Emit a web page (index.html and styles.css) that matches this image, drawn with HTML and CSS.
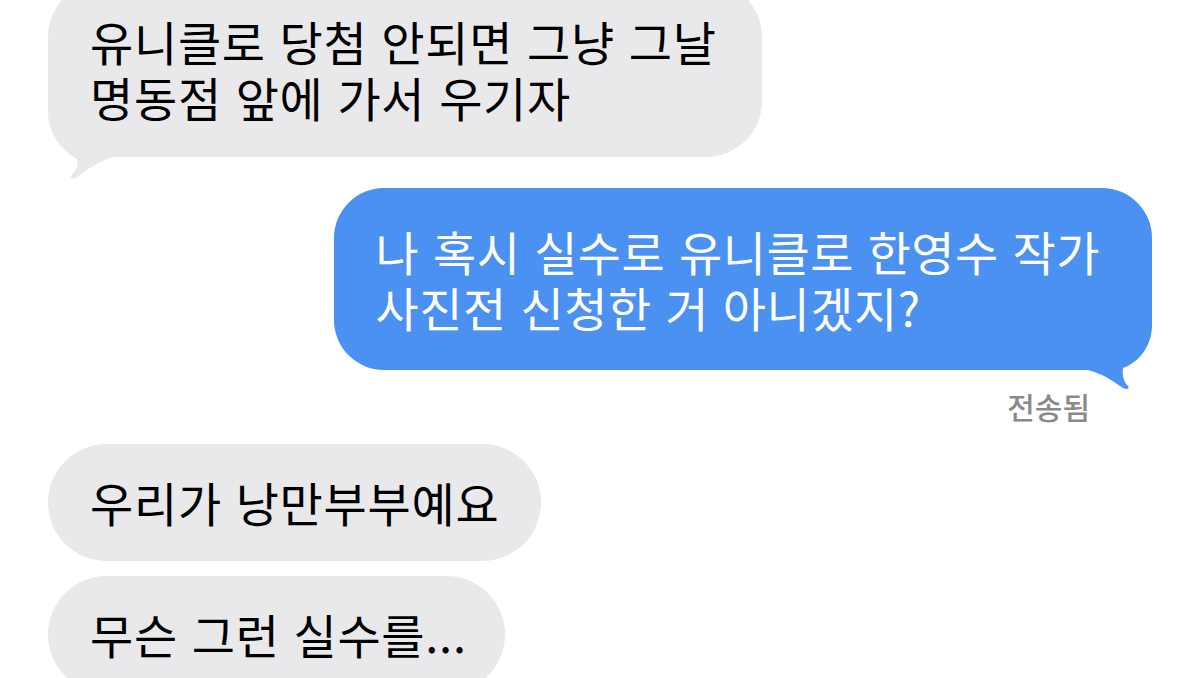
FILE: index.html
```html
<!DOCTYPE html>
<html lang="ko">
<head>
<meta charset="utf-8">
<title>메시지</title>
<link rel="stylesheet" href="styles.css">
</head>
<body>
<div class="thread">
  <div class="row in first">
    <div class="bubble gray has-tail">
      <svg class="tail tail-left" viewBox="0 -60 80 90" aria-hidden="true"><path d="M0 -60 L0 -45 C0 -25 12 -8 29 2 C31 8 28 14 23 19 C21 22 24 23 28 21 C38 14 48 5 66 0 L80 0 L80 -60 Z"/></svg>
      <span class="text">유니클로 당첨 안되면 그냥 그날<br>명동점 앞에 가서 우기자</span>
    </div>
  </div>
  <div class="row out">
    <div class="bubble blue has-tail">
      <svg class="tail tail-right" viewBox="0 -60 80 90" aria-hidden="true"><path d="M0 -60 L0 -45 C0 -25 12 -8 29 -2 C30 6 28 12 24 16 C22 19 25 20 29 18 C38 12 48 4 64 0 L80 0 L80 -60 Z"/></svg>
      <span class="text">나 혹시 실수로 유니클로 한영수 작가<br>사진전 신청한 거 아니겠지?</span>
    </div>
  </div>
  <div class="status">전송됨</div>
  <div class="row in">
    <div class="bubble gray single"><span class="text">우리가 낭만부부예요</span></div>
  </div>
  <div class="row in">
    <div class="bubble gray single last"><span class="text">무슨 그런 실수를...</span></div>
  </div>
</div>
</body>
</html>
```

FILE: styles.css
```css
html, body {
  margin: 0;
  padding: 0;
  background: #ffffff;
}

body {
  width: 1200px;
  height: 678px;
  overflow: hidden;
  font-family: "Noto Sans CJK KR", "Noto Sans", sans-serif;
}

.thread {
  display: flex;
  flex-direction: column;
  padding: 0 48px 0 48px;
}

.row {
  display: flex;
}

.row.in {
  justify-content: flex-start;
}

.row.out {
  justify-content: flex-end;
  margin-top: 31px;
}

.row.first {
  margin-top: -19px;
}

.bubble {
  position: relative;
  font-size: 47px;
  line-height: 56px;
  font-weight: 400;
  letter-spacing: 0.7px;
  white-space: nowrap;
  border-radius: 56px;
}

.text {
  position: relative;
}

.gray {
  background: #e9e9eb;
  color: #000000;
  padding: 32px 45px 32px 42px;
}

.blue {
  background: #4a91f2;
  color: #ffffff;
  padding: 35px 52px 35px 42px;
  letter-spacing: 0.5px;
  border-radius: 50px;
}

.tail {
  position: absolute;
  bottom: -30px;
  width: 80px;
  height: 90px;
}

.tail-left {
  left: 0;
}

.tail-left path {
  fill: #e9e9eb;
}

.tail-right {
  right: 0;
  transform: scaleX(-1);
}

.tail-right path {
  fill: #4a91f2;
}

.status {
  align-self: flex-end;
  margin: 19px 62px 0 0;
  font-size: 30px;
  line-height: 34px;
  font-weight: 500;
  color: #8a8a8e;
}

.row + .row.in {
  margin-top: 15px;
}

.status + .row.in {
  margin-top: 21px;
}

.single {
  padding: 30px 42px 31px 42px;
  border-radius: 59px;
}

.single.last {
  padding-right: 38px;
}
```
